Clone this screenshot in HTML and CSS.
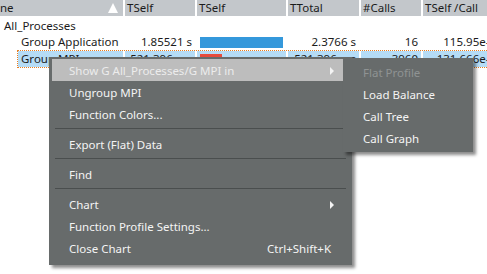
FILE: index.html
```html
<!DOCTYPE html>
<html lang="en">

<head>
    <meta charset="UTF-8">
    <title>Function Profile</title>
    <link rel="stylesheet" href="styles.css">
</head>

<body>

    <div class="profile">
        <div class="head">
            <div class="hcell name-head">ne<span class="sort"></span></div>
            <div class="hcell">TSelf</div>
            <div class="hcell">TSelf</div>
            <div class="hcell">TTotal</div>
            <div class="hcell">#Calls</div>
            <div class="hcell">TSelf /Call</div>
        </div>

        <div class="row first">
            <div class="cell name">All_Processes</div>
        </div>

        <div class="row">
            <div class="cell name sub">Group Application</div>
            <div class="cell num">1.85521 s</div>
            <div class="cell bar-cell"><span class="bar blue" style="width: 83px"></span></div>
            <div class="cell num">2.3766 s</div>
            <div class="cell num">16</div>
            <div class="cell num">115.95e-3</div>
        </div>

        <div class="row selected">
            <div class="cell name sub">Group MPI</div>
            <div class="cell num">521.396 ms</div>
            <div class="cell bar-cell"><span class="bar red" style="width: 22px"></span></div>
            <div class="cell num">521.396 ms</div>
            <div class="cell num">3960</div>
            <div class="cell num">131.666e-3</div>
        </div>
    </div>

    <!-- context menu -->
    <div class="menu">
        <div class="item active">Show G All_Processes/G MPI in<span class="arrow"></span></div>
        <div class="item">Ungroup MPI</div>
        <div class="item">Function Colors...</div>
        <div class="sep"></div>
        <div class="item">Export (Flat) Data</div>
        <div class="sep"></div>
        <div class="item">Find</div>
        <div class="sep"></div>
        <div class="item">Chart<span class="arrow"></span></div>
        <div class="item">Function Profile Settings...</div>
        <div class="item">Close Chart<span class="shortcut">Ctrl+Shift+K</span></div>
    </div>

    <div class="menu submenu">
        <div class="item disabled">Flat Profile</div>
        <div class="item">Load Balance</div>
        <div class="item">Call Tree</div>
        <div class="item">Call Graph</div>
    </div>

</body>

</html>
```

FILE: styles.css
```css
body {
    margin: 0;
    background: #ffffff;
    font-family: "Noto Sans", "DejaVu Sans", sans-serif;
    font-size: 11.5px;
    color: #1b1b1b;
    overflow: hidden;
}

.profile {
    width: 487px;
    overflow: hidden;
}

.head,
.row {
    display: grid;
    grid-template-columns: 123px 70px 89px 71px 60px 76px;
    column-gap: 2px;
}

.head {
    height: 16px;
    line-height: 16px;
}

.hcell {
    background: #c3c7cb;
    padding-left: 2px;
    white-space: nowrap;
    overflow: hidden;
}

.name-head {
    position: relative;
    padding-left: 0;
}

/* sort indicator */
.sort {
    position: absolute;
    right: 5px;
    top: 3px;
    width: 0;
    height: 0;
    border-left: 5px solid transparent;
    border-right: 5px solid transparent;
    border-bottom: 10px solid #ffffff;
}

.row {
    height: 16px;
    line-height: 16px;
}

.row.first {
    margin-top: 2px;
}

.cell {
    white-space: nowrap;
    overflow: hidden;
}

.name {
    padding-left: 4px;
}

.name.sub {
    padding-left: 21px;
}

.num {
    text-align: right;
    padding-right: 3px;
}

.bar-cell {
    padding-left: 3px;
}

.bar {
    display: inline-block;
    height: 11px;
    vertical-align: middle;
    margin-top: -1px;
}

.blue {
    background: #3498db;
}

.red {
    background: #e74c3c;
}

.selected {
    border-top: 1px dotted #e67e22;
    border-bottom: 1px dotted #e67e22;
    border-left: 1px dotted #e67e22;
    margin-left: 17px;
    grid-template-columns: 105px 70px 89px 71px 60px 76px;
}

.selected .cell {
    background: #b5dcf6;
}

.selected .name.sub {
    padding-left: 3px;
}

/* menus */
.menu {
    position: absolute;
    left: 49px;
    top: 57px;
    width: 297px;
    padding: 2px 3px 6px 3px;
    background: #676b6b;
    color: #f4f4f4;
    box-shadow: 3px 3px 3px rgba(0, 0, 0, 0.45);
}

.item {
    position: relative;
    height: 22px;
    line-height: 24px;
    padding-left: 17px;
    white-space: nowrap;
}

.item.active {
    background: #bdbdbd;
    color: #ececec;
}

.item.disabled {
    color: #8f9393;
}

.arrow {
    position: absolute;
    right: 15px;
    top: 8px;
    width: 0;
    height: 0;
    border-top: 4px solid transparent;
    border-bottom: 4px solid transparent;
    border-left: 4px solid #f4f4f4;
}

.shortcut {
    position: absolute;
    right: 18px;
}

.sep {
    height: 1px;
    margin: 3px 3px 4px 3px;
    background: #4a4e4e;
}

.submenu {
    left: 343px;
    top: 58px;
    width: 124px;
    padding: 3px 3px 3px 3px;
}
```
